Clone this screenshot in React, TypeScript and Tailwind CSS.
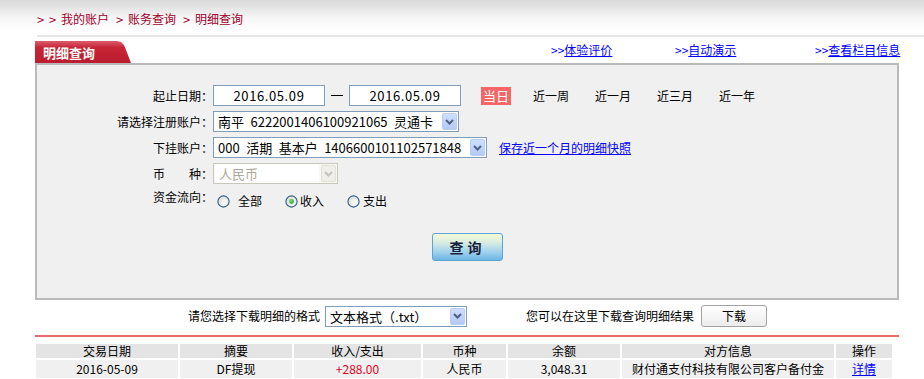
import React from "react";

function Chevron({ disabled }: { disabled?: boolean }) {
  return (
    <svg width="9" height="6" viewBox="0 0 9 6">
      <path
        d="M1 1 L4.5 4.5 L8 1"
        fill="none"
        stroke={disabled ? "#c4c3bc" : "#4d6185"}
        strokeWidth="2"
      />
    </svg>
  );
}

function Select({
  className,
  value,
  disabled,
}: {
  className: string;
  value: string;
  disabled?: boolean;
}) {
  return (
    <div
      className={
        "flex h-[21px] items-center border " +
        (disabled
          ? "border-[#c9c7ba] bg-[#f7f7f4] text-[#aca899]"
          : "border-[#7f9db9] bg-white text-black") +
        " " +
        className
      }
    >
      <div
        className={
          "flex h-full flex-1 items-center overflow-hidden whitespace-nowrap pl-[4px] text-[13px] " +
          (disabled ? "m-[1px] bg-white" : "")
        }
      >
        {value}
      </div>
      <div
        className={
          "m-[1px] flex h-[17px] w-[15px] items-center justify-center rounded-[2px] border " +
          (disabled
            ? "border-[#e2e1da] bg-[#f0efea]"
            : "border-[#b9cdf6] bg-[linear-gradient(to_bottom,#cfdefd,#b4c9f6)]")
        }
      >
        <Chevron disabled={disabled} />
      </div>
    </div>
  );
}

function Radio({ checked }: { checked?: boolean }) {
  return (
    <svg width="13" height="13" viewBox="0 0 13 13">
      <defs>
        <radialGradient id="rg" cx="0.65" cy="0.65" r="0.7">
          <stop offset="0" stopColor="#ffffff" />
          <stop offset="1" stopColor="#dcdad2" />
        </radialGradient>
        <radialGradient id="dot" cx="0.4" cy="0.4" r="0.7">
          <stop offset="0" stopColor="#7ee07e" />
          <stop offset="1" stopColor="#1c9a1c" />
        </radialGradient>
      </defs>
      <circle cx="6.5" cy="6.5" r="5.6" fill="url(#rg)" stroke="#2e5f8c" strokeWidth="1.1" />
      {checked && <circle cx="6.5" cy="6.5" r="2.4" fill="url(#dot)" />}
    </svg>
  );
}

export default function App() {
  return (
    <div className="h-[379px] w-[924px] overflow-hidden bg-white font-['Noto_Sans_CJK_SC',sans-serif] text-[12px] leading-none text-black">
      {/* header */}
      <div className="h-[41px] bg-[linear-gradient(to_bottom,#d8d8d8,#f6f6f6_18px,#ffffff_30px)]">
        <div className="flex h-[35px] items-center gap-[5px] pl-[37px] pt-[3px] text-[#a0002a]">
          <span className="w-[7px] text-[13px]">&gt;</span>
          <span className="w-[7px] text-[13px]">&gt;</span>
          <span>我的账户</span>
          <span className="ml-[2px] w-[7px] text-[13px]">&gt;</span>
          <span>账务查询</span>
          <span className="ml-[2px] w-[7px] text-[13px]">&gt;</span>
          <span>明细查询</span>
        </div>
        <div className="ml-[37px] h-[2px] bg-[#e6e6e6]" />
      </div>

      {/* tab row */}
      <div className="ml-[35px] flex h-[22px] w-[864px]">
        <div className="flex h-[22px] w-[96px] items-center bg-[linear-gradient(to_bottom,#dc5d6c,#c62536_30%,#bb1e2e)] pl-[8px] text-[13px] font-bold text-white [clip-path:polygon(0_0,82px_0,86px_1px,89px_4px,91px_9px,96px_22px,0_22px)]">
          明细查询
        </div>
        <div className="ml-auto flex whitespace-nowrap pt-[3px] text-[#0000ff]">
          <div className="w-[124px]">
            &gt;&gt;<span className="underline">体验评价</span>
          </div>
          <div className="w-[140px]">
            &gt;&gt;<span className="underline">自动演示</span>
          </div>
          <div className="w-[84px]">
            &gt;&gt;<span className="underline">查看栏目信息</span>
          </div>
        </div>
      </div>

      {/* panel */}
      <div className="ml-[35px] flex h-[237px] w-[864px] flex-col border-2 border-[#bababa] bg-[#f0f0f0] pt-[20px]">
        <div className="flex flex-col gap-[5px]">
          {/* row 1 */}
          <div className="flex h-[21px] items-center">
            <div className="w-[176px] text-right">起止日期：</div>
            <div className="flex h-[21px] w-[112px] items-center justify-center border border-[#7f9db9] bg-white text-[13px] tracking-[0.6px]">
              2016.05.09
            </div>
            <div className="flex w-[24px] justify-center">
              <div className="h-[1px] w-[12px] bg-black" />
            </div>
            <div className="flex h-[21px] w-[112px] items-center justify-center border border-[#7f9db9] bg-white text-[13px] tracking-[0.6px]">
              2016.05.09
            </div>
            <div className="ml-[20px] flex h-[18px] w-[30px] items-center justify-center bg-[#f56767] text-[13px] text-white">
              当日
            </div>
            <div className="ml-[22px]">近一周</div>
            <div className="ml-[26px]">近一月</div>
            <div className="ml-[26px]">近三月</div>
            <div className="ml-[26px]">近一年</div>
          </div>
          {/* row 2 */}
          <div className="flex h-[21px] items-center">
            <div className="w-[176px] text-right">请选择注册账户：</div>
            <Select className="w-[246px]" value={"南平\u20026222001406100921065\u2002灵通卡"} />
          </div>
          {/* row 3 */}
          <div className="flex h-[21px] items-center">
            <div className="w-[176px] text-right">下挂账户：</div>
            <Select className="w-[274px]" value={"000\u2002活期\u2002基本户\u20021406600101102571848"} />
            <div className="ml-[12px] text-[#0000ff] underline">保存近一个月的明细快照</div>
          </div>
          {/* row 4 */}
          <div className="flex h-[21px] items-center">
            <div className="w-[176px] text-right">币　　种：</div>
            <Select className="w-[125px]" value="人民币" disabled />
          </div>
          {/* row 5 */}
          <div className="flex h-[21px] items-center">
            <div className="w-[176px] self-start pt-[2px] text-right">资金流向：</div>
            <div className="ml-[4px] flex items-center pt-[3px]">
              <Radio />
              <span className="ml-[8px]">全部</span>
              <span className="ml-[23px] flex">
                <Radio checked />
              </span>
              <span className="ml-[2px]">收入</span>
              <span className="ml-[23px] flex">
                <Radio />
              </span>
              <span className="ml-[3px]">支出</span>
            </div>
          </div>
        </div>
        <div className="mt-[23px] flex justify-center pl-[1px]">
          <div className="flex h-[28px] w-[71px] items-center justify-center rounded-[3px] border border-[#5aa5d6] bg-[linear-gradient(to_bottom,#f4f8d8,#dcefe0_30%,#9fd0ee_70%,#6bb6e2)] text-[14px] font-bold tracking-[4px] text-[#1b1f3a]">
            查询
          </div>
        </div>
      </div>

      {/* download row */}
      <div className="mt-[5px] flex h-[22px] items-center pl-[188px]">
        <span>请您选择下载明细的格式</span>
        <Select className="ml-[5px] w-[142px]" value="文本格式（.txt）" />
        <span className="ml-[59px]">您可以在这里下载查询明细结果</span>
        <div className="ml-[7px] flex h-[22px] w-[66px] items-center justify-center rounded-[3px] border border-[#a3a3a3] bg-[linear-gradient(to_bottom,#ffffff,#ececec)]">
          下载
        </div>
      </div>

      <div className="ml-[35px] mt-[8px] h-[2px] w-[864px] bg-[#ec6b6b]" />

      {/* table */}
      <div className="ml-[36px] mt-[7px] grid w-[856px] grid-cols-[142px_112px_127px_83px_112px_212px_56px] gap-[2px]">
        {["交易日期", "摘要", "收入/支出", "币种", "余额", "对方信息", "操作"].map((h) => (
          <div key={h} className="flex h-[14px] items-center justify-center bg-[#e4e4e4]">
            {h}
          </div>
        ))}
        <div className="flex h-[18px] items-center justify-center bg-[#f0f0f0]">2016-05-09</div>
        <div className="flex h-[18px] items-center justify-center bg-[#f0f0f0]">DF提现</div>
        <div className="flex h-[18px] items-center justify-center bg-[#f0f0f0] text-[#e0001b]">+288.00</div>
        <div className="flex h-[18px] items-center justify-center bg-[#f0f0f0]">人民币</div>
        <div className="flex h-[18px] items-center justify-center bg-[#f0f0f0]">3,048.31</div>
        <div className="flex h-[18px] items-center justify-center bg-[#f0f0f0]">财付通支付科技有限公司客户备付金</div>
        <div className="flex h-[18px] items-center justify-center bg-[#f0f0f0] text-[#0000ff] underline">详情</div>
        {[0, 1, 2, 3, 4, 5, 6].map((i) => (
          <div key={i} className="h-[18px] bg-[#f0f0f0]" />
        ))}
      </div>
    </div>
  );
}
